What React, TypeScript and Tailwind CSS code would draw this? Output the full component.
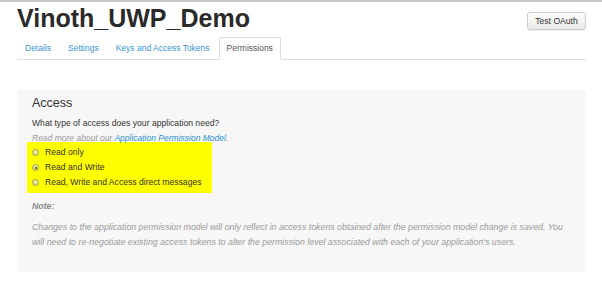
import React from "react";

function Radio({ checked }: { checked?: boolean }) {
  return (
    <span className="relative inline-block w-[7px] h-[7px] rounded-full border border-[#9d9d55] bg-gradient-to-b from-[#f3f3a8] to-[#d9d97a] shrink-0">
      {checked && (
        <span className="absolute left-[1.5px] top-[1.5px] w-[2px] h-[2px] rounded-full bg-[#2e2e10]" />
      )}
    </span>
  );
}

export default function App() {
  const tabs = ["Details", "Settings", "Keys and Access Tokens"];
  return (
    <div
      className="w-[602px] h-[281px] bg-white overflow-hidden text-[#333]"
      style={{ fontFamily: '"Liberation Sans", Arial, sans-serif' }}
    >
      <div className="h-[2px] bg-[#c6c6c6]" />
      <div className="pl-[17px] pr-[16px]">
        <div className="flex justify-between items-start h-[35px]">
          <h1 className="text-[25px] font-bold leading-[25px] mt-[4px] text-[#2a2a2a]">
            Vinoth_UWP_Demo
          </h1>
          <button className="mt-[10px] h-[18px] w-[59px] rounded-[3px] border border-[#cccccc] bg-gradient-to-b from-white to-[#e8e8e8] text-[8.6px] leading-none text-[#333] shadow-[0_1px_1px_rgba(0,0,0,0.08)]">
            Test OAuth
          </button>
        </div>
        <ul className="flex border-b border-[#dddddd] h-[23px] text-[8.5px]">
          {tabs.map((t) => (
            <li
              key={t}
              className="mr-[1px] -mb-px h-[23px] px-[7px] flex items-center border border-transparent text-[#3a96d3]"
            >
              {t}
            </li>
          ))}
          <li className="-mb-px h-[23px] px-[7px] flex items-center border border-[#dddddd] border-b-white bg-white rounded-t-[2px] text-[#555]">
            Permissions
          </li>
        </ul>
        <div className="mt-[30px] h-[182px] rounded-[3px] bg-[#f7f7f7] px-[15px] pt-[6px]">
          <div className="text-[12.5px] leading-[15px] text-[#333]">Access</div>
          <div className="mt-[5px] text-[8.6px] leading-[15px] text-[#333]">
            What type of access does your application need?
          </div>
          <div className="text-[8.5px] leading-[15px] h-[11px] italic text-[#9a9a9a]">
            Read more about our{" "}
            <span className="text-[#2a8fd0]">Application Permission Model</span>.
          </div>
          <div className="-ml-[5px] w-[185px] bg-[#ffff00] pt-[3px] pb-[3px] pl-[5px] text-[8.6px] text-[#333]">
            <div className="h-[15px] flex items-center gap-[6px]">
              <Radio />
              <span>Read only</span>
            </div>
            <div className="h-[15px] flex items-center gap-[6px]">
              <Radio checked />
              <span>Read and Write</span>
            </div>
            <div className="h-[15px] flex items-center gap-[6px]">
              <Radio />
              <span>Read, Write and Access direct messages</span>
            </div>
          </div>
          <div className="mt-[6px] text-[8.75px] leading-[15px] font-bold italic text-[#888]">
            Note:
          </div>
          <p className="mt-[6px] text-[8.8px] leading-[14.5px] italic text-[#9a9a9a]">
            Changes to the application permission model will only reflect in access tokens
            obtained after the permission model change is saved. You will need to re-negotiate
            existing access tokens to alter the permission level associated with each of your
            application's users.
          </p>
        </div>
      </div>
    </div>
  );
}
